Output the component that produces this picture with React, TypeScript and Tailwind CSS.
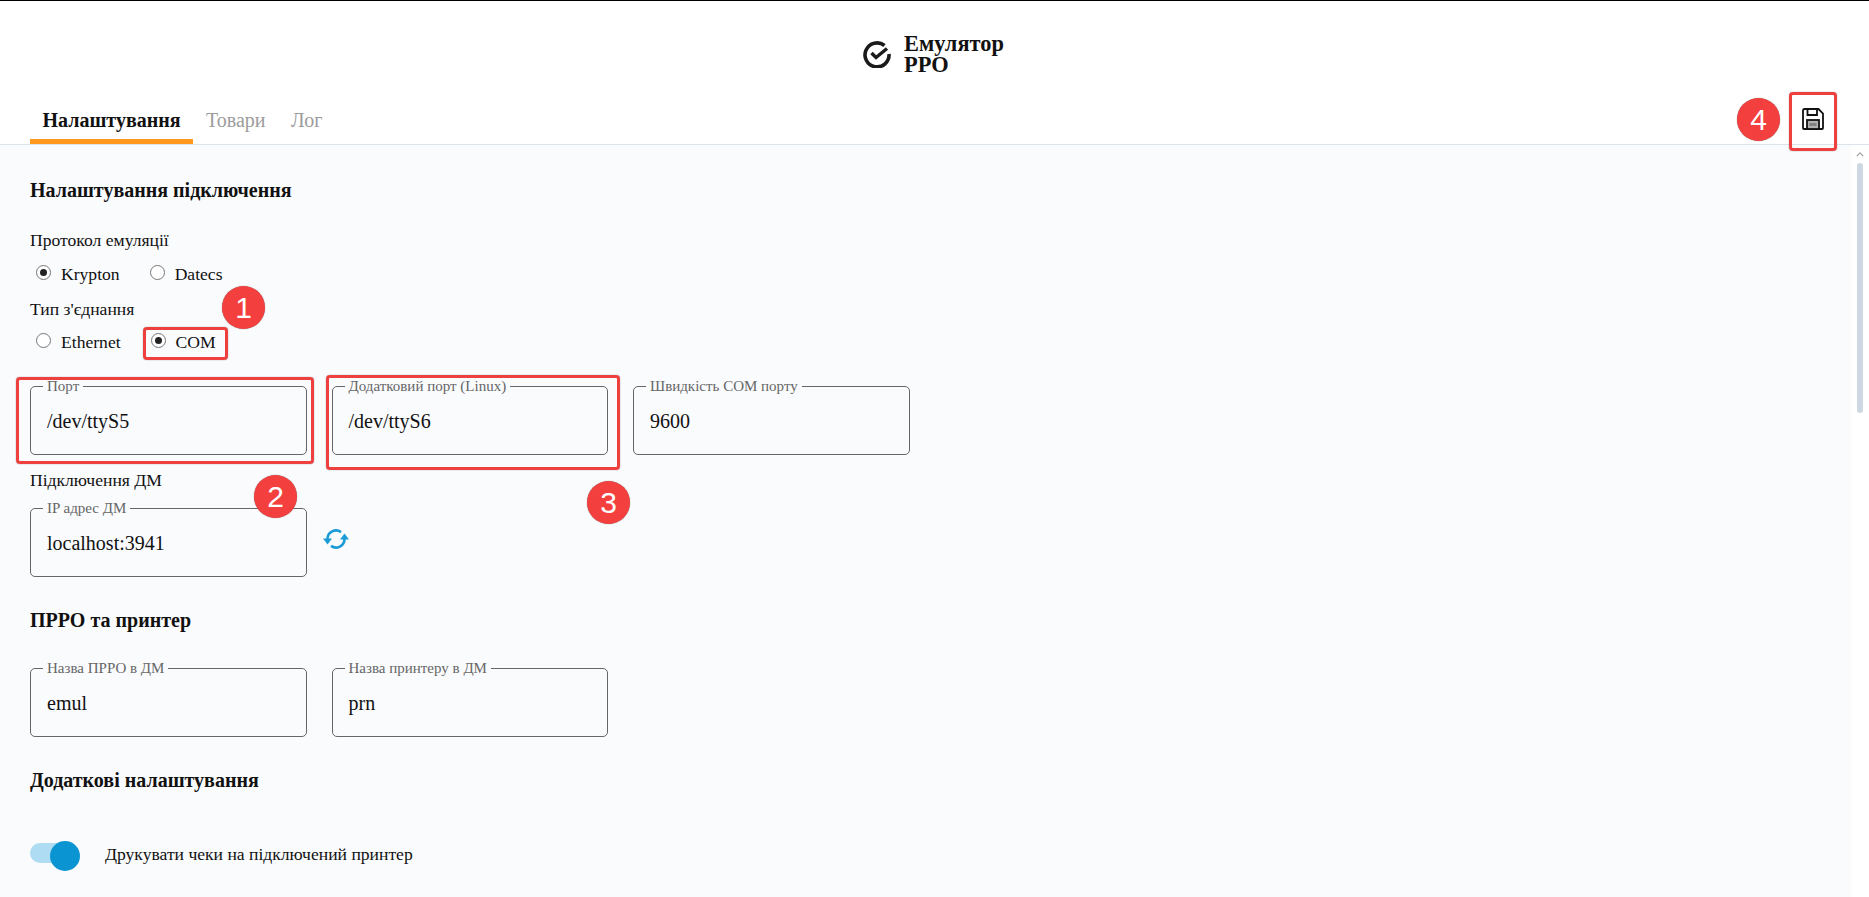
const serif = "font-['Liberation_Serif','Noto_Sans_CJK_SC',serif]";

function Radio({ label, checked }: { label: string; checked?: boolean }) {
  return (
    <label className="flex items-center h-[24px]">
      <span className="w-[15px] h-[15px] ml-[6px] -mt-[4px] rounded-full border border-[#767676] bg-white flex items-center justify-center">
        {checked && <span className="w-[7px] h-[7px] rounded-full bg-[#222]" />}
      </span>
      <span className="ml-[10px] text-[17.6px]">{label}</span>
    </label>
  );
}

function Field({ label, value }: { label: string; value: string }) {
  return (
    <fieldset className="w-[276.5px] h-[76px] border border-[#666] rounded-[5px] pl-[12px] pr-2 min-w-0">
      <legend className="px-[4px] text-[15px] leading-[15px] text-[#666]">{label}</legend>
      <div className="text-[20px] leading-[24px] mt-[15px] pl-[4px] text-[#111]">{value}</div>
    </fieldset>
  );
}

function Badge({ n, className }: { n: number; className: string }) {
  return (
    <div className={`absolute w-[43px] h-[43px] rounded-full bg-[#f43f3f] text-white text-[30px] flex items-center justify-center font-['Liberation_Sans',sans-serif] shadow-[0_0_1px_#666] ${className}`}>
      {n}
    </div>
  );
}

function Mark({ className }: { className: string }) {
  return <div className={`absolute border-[3px] border-[#ef4040] rounded-[4px] shadow-[0_0_1px_#555] ${className}`} />;
}

function Heading({ children, className }: { children: string; className?: string }) {
  return <h2 className={`text-[20px] font-bold leading-[24px] text-[#111] ${className ?? ""}`}>{children}</h2>;
}

export default function App() {
  return (
    <div className={`${serif} relative h-[897px] overflow-hidden bg-white text-[#111] border-t border-black`}>
      <header className="h-[144px] bg-white border-b border-[#dde3ea] flex flex-col">
        <div className="flex justify-center items-center h-[106px]">
          <svg viewBox="0 0 28 28" className="w-[28px] h-[28px] mr-[13px]" fill="none">
            <path d="M21.5 5.5A12 12 0 1 0 26 14" stroke="#1a1a1a" strokeWidth="3.6" />
            <path d="M8.5 13l4.5 4.5 11-9" stroke="#1a1a1a" strokeWidth="3.4" />
          </svg>
          <div className="text-[22.4px] font-bold leading-[21px] w-[102px]">
            Емулятор
            <br />
            РРО
          </div>
        </div>
        <div className="h-[37px] flex px-[30px] justify-between">
          <nav className="flex text-[20px]">
            <div className="pt-[1px] px-[12.5px] border-b-[5px] border-[#ff9a1f] font-bold leading-[24px]">Налаштування</div>
            <div className="pt-[1px] px-[13px] text-[#9c9c9c] leading-[24px]">Товари</div>
            <div className="pt-[1px] px-[12.5px] text-[#9c9c9c] leading-[24px]">Лог</div>
          </nav>
          <button className="w-[48px] mr-[2px] flex items-start justify-center pt-[1px]">
            <svg viewBox="0 0 22 22" className="w-[22px] h-[22px]" fill="none" stroke="#111" strokeWidth="1.8">
              <path d="M2.5 1h14L21 5.5V20a1 1 0 0 1-1 1H2a1 1 0 0 1-1-1V2.5A1.5 1.5 0 0 1 2.5 1z" />
              <path d="M5.5 1.5v5.5h9.5V1.5" />
              <rect x="5" y="12" width="12" height="9" fill="#b0b0b0" />
              <rect x="7.5" y="15" width="7" height="3" fill="#808080" stroke="none" />
            </svg>
          </button>
        </div>
      </header>

      <div className="flex h-[752px]">
        <main className="flex-1 bg-[#fafbfd] pl-[30px] pt-[33px]">
          <Heading>Налаштування підключення</Heading>
          <div className="mt-[26px] text-[17.6px] leading-[24px]">Протокол емуляції</div>
          <div className="flex gap-[24px] mt-[10px]">
            <Radio label="Krypton" checked />
            <Radio label="Datecs" />
          </div>
          <div className="mt-[11px] text-[17.6px] leading-[24px]">Тип з'єднання</div>
          <div className="flex gap-[24px] mt-[9px]">
            <Radio label="Ethernet" />
            <Radio label="COM" checked />
          </div>
          <div className="flex gap-[25px] mt-[25px]">
            <Field label="Порт" value="/dev/ttyS5" />
            <Field label="Додатковий порт (Linux)" value="/dev/ttyS6" />
            <Field label="Швидкість COM порту" value="9600" />
          </div>
          <div className="mt-[13px] text-[17.6px] leading-[24px]">Підключення ДМ</div>
          <div className="flex items-start gap-[16px] mt-[9px]">
            <Field label="IP адрес ДМ" value="localhost:3941" />
            <svg viewBox="0 0 26 22" className="w-[26px] h-[22px] mt-[27px]" fill="none" stroke="#1a9bd7" strokeWidth="2.6">
              <path d="M4.5 11A8.5 8.5 0 0 1 18 4.1" />
              <path d="M21.5 11A8.5 8.5 0 0 1 8 17.9" />
              <path d="M0 10.5h9L4.5 16.5z" fill="#1a9bd7" stroke="none" />
              <path d="M17 11.5h9L21.5 5.5z" fill="#1a9bd7" stroke="none" />
            </svg>
          </div>
          <Heading className="mt-[31px]">ПРРО та принтер</Heading>
          <div className="flex gap-[25px] mt-[29px]">
            <Field label="Назва ПРРО в ДМ" value="emul" />
            <Field label="Назва принтеру в ДМ" value="prn" />
          </div>
          <Heading className="mt-[31px]">Додаткові налаштування</Heading>
          <div className="flex items-center h-[30px] mt-[49px]">
            <div className="relative w-[50px] h-[30px]">
              <div className="w-[42px] h-[20px] mt-[2px] rounded-full bg-[#aedcf2]" />
              <div className="absolute left-[20px] top-0 w-[30px] h-[30px] rounded-full bg-[#0a94d1]" />
            </div>
            <span className="ml-[25px] -mt-[3px] text-[17.6px]">Друкувати чеки на підключений принтер</span>
          </div>
        </main>
        <aside className="w-[18px] bg-white flex flex-col items-center">
          <svg viewBox="0 0 10 6" className="w-[8px] h-[5px] mt-[7px]">
            <path d="M1 5l4-4 4 4" stroke="#a3a3a3" strokeWidth="1.6" fill="none" />
          </svg>
          <div className="w-[6px] h-[250px] mt-[6px] rounded-full bg-[#cdd8e2]" />
        </aside>
      </div>

      {/* annotations */}
      <Mark className="left-[143px] top-[326px] w-[85px] h-[33px]" />
      <Mark className="left-[16px] top-[376px] w-[298px] h-[87px]" />
      <Mark className="left-[326px] top-[374px] w-[294px] h-[95px]" />
      <Mark className="left-[1789px] top-[91px] w-[48px] h-[59px]" />
      <Badge n={1} className="left-[222px] top-[285px]" />
      <Badge n={2} className="left-[254px] top-[474px]" />
      <Badge n={3} className="left-[587px] top-[480px]" />
      <Badge n={4} className="left-[1737px] top-[97px]" />
    </div>
  );
}
